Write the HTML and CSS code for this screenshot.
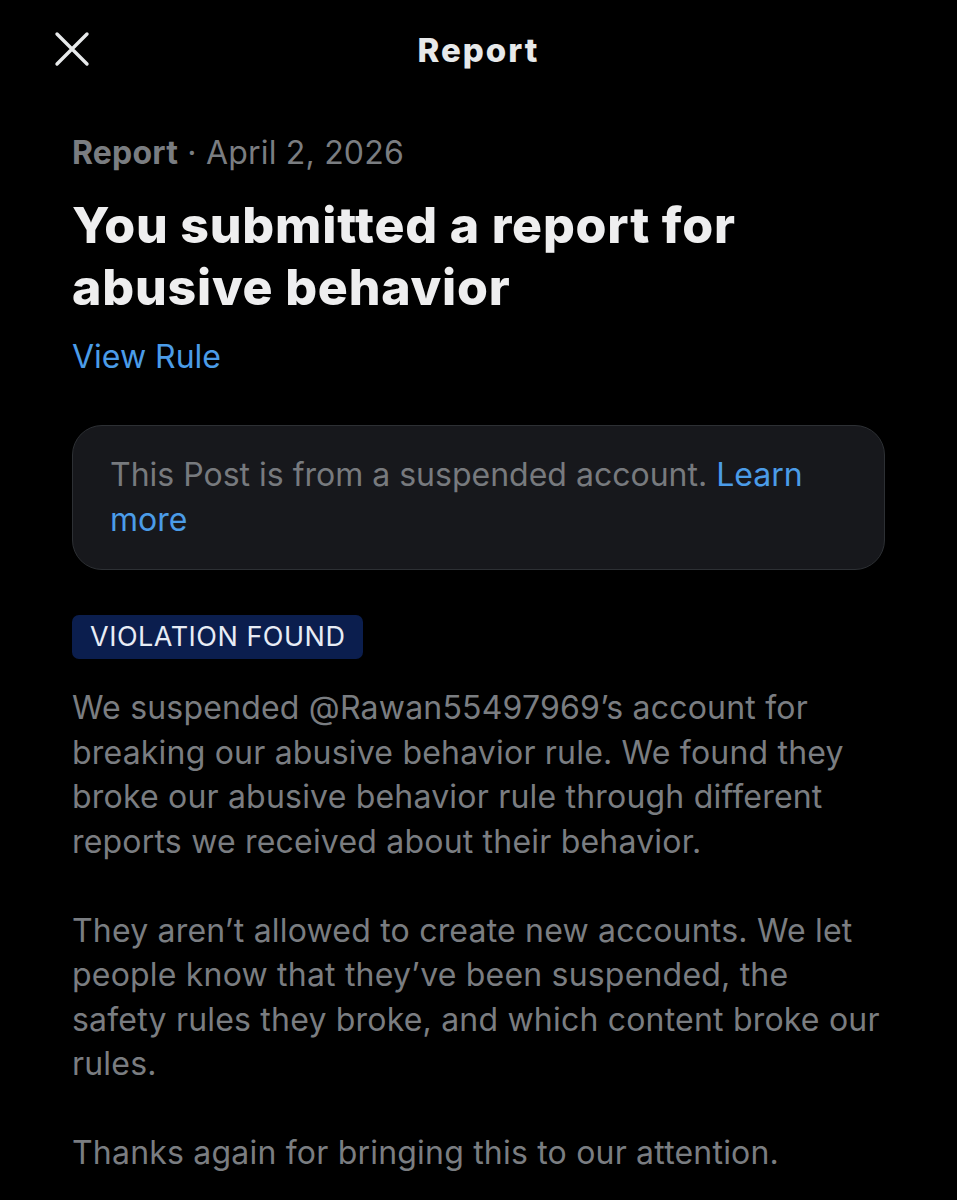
FILE: index.html
```html
<!DOCTYPE html>
<html lang="en">
<head>
<meta charset="utf-8">
<title>Report</title>
<link rel="stylesheet" href="styles.css">
</head>
<body>
<div class="page">
  <header class="topbar">
    <button class="close" aria-label="Close">
      <svg width="36" height="36" viewBox="0 0 36 36"><path d="M3 3 L33 33 M33 3 L3 33" stroke="#e7e9ea" stroke-width="3.4" stroke-linecap="round" fill="none"/></svg>
    </button>
    <h1 class="topbar-title">Report</h1>
    <span class="spacer"></span>
  </header>
  <main class="content">
    <div class="meta"><span class="meta-strong">Report</span> · April 2, 2026</div>
    <h2 class="headline">You submitted a report for abusive behavior</h2>
    <a class="link rule-link" href="#">View Rule</a>
    <div class="notice">This Post is from a suspended account. <a class="link" href="#">Learn more</a></div>
    <span class="badge">VIOLATION FOUND</span>
    <div class="body">
      <p>We suspended @Rawan55497969’s account for breaking our abusive behavior rule. We found they broke our abusive behavior rule through different reports we received about their behavior.</p>
      <p>They aren’t allowed to create new accounts. We let people know that they’ve been suspended, the safety rules they broke, and which content broke our rules.</p>
      <p>Thanks again for bringing this to our attention.</p>
    </div>
  </main>
</div>
</body>
</html>
```
FILE: styles.css
```css
* { box-sizing: border-box; }
html, body { margin: 0; padding: 0; background: #000; }
body {
  font-family: Inter, Roboto, "Liberation Sans", sans-serif;
  color: #e7e9ea;
  width: 957px;
  height: 1200px;
  overflow: hidden;
}
.page { width: 957px; }
.topbar {
  display: flex;
  align-items: center;
  height: 100px;
  padding: 0 52px 0 52px;
}
.close {
  background: none;
  border: 0;
  padding: 0;
  width: 40px;
  height: 40px;
  display: flex;
  align-items: center;
  justify-content: center;
  margin-top: -2px;
}
.topbar-title {
  flex: 1;
  text-align: center;
  margin: 0;
  font-size: 33px;
  font-weight: 800;
  color: #e7e9ea;
  letter-spacing: 2px;
}
.spacer { width: 40px; }
.content {
  padding-top: 31px;
  padding-left: 72px;
  padding-right: 72px;
  display: flex;
  flex-direction: column;
  align-items: flex-start;
}
.meta {
  font-size: 32px;
  color: #7a7d81;
  line-height: 44px;
  letter-spacing: 0.2px;
}
.meta-strong { font-weight: 700; }
.headline {
  margin: 19px 0 0 0;
  font-size: 50px;
  line-height: 62px;
  font-weight: 800;
  color: #eeeeef;
  letter-spacing: 0.8px;
}
.link { color: #4b9ce8; text-decoration: none; }
.rule-link {
  margin-top: 17px;
  font-size: 32px;
  line-height: 44px;
}
.notice {
  align-self: stretch;
  margin-top: 46px;
  background: #17181c;
  border: 1.5px solid #2d3034;
  border-radius: 30px;
  padding: 26px 38px 27px 37px;
  font-size: 32px;
  line-height: 45px;
  color: #777a7e;
}
.badge {
  margin-top: 45px;
  background: #0b1e4e;
  color: #e7ecf5;
  font-size: 27px;
  line-height: 44px;
  padding: 0 18px;
  border-radius: 7px;
  letter-spacing: 0.5px;
}
.body {
  margin-top: 27px;
  font-size: 32px;
  line-height: 44.5px;
  color: #7a7d81;
  letter-spacing: 0.2px;
}
.body p { margin: 0 0 44.5px 0; }
```
